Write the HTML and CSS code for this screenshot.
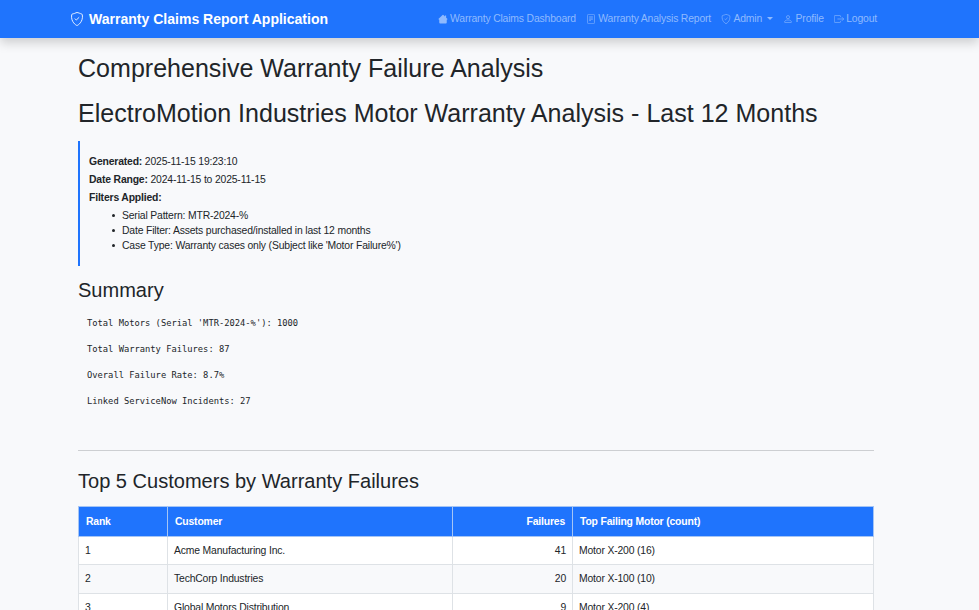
FILE: index.html
```html
<!DOCTYPE html>
<html lang="en">
<head>
<meta charset="utf-8">
<title>Warranty Claims Report Application</title>
<link rel="stylesheet" href="styles.css">
</head>
<body>
<nav class="navbar">
  <a class="brand"><svg class="brand-icon" viewBox="0 0 16 16"><path d="M5.3 1.6C4.4 1.8 3.2 2.2 2.6 2.4a1 1 0 0 0-.7.8c-.6 4.1.7 7.200 2.300 9.200C5.500 14.100 7.200 15.200 8 15.500c.8-.3 2.500-1.400 3.800-3.100 1.600-2 2.900-5.100 2.300-9.200a1 1 0 0 0-.7-.8C11.800 1.800 9.200.6 8 .6c-.6 0-1.600.5-2.700 1z"/><path d="M5.500 7.500 7.200 9.200 10.500 6"/></svg><span>Warranty Claims Report Application</span></a>
  <div class="links">
    <a class="link dashboard"><svg class="icon solid" viewBox="0 0 16 16"><path d="M8.700 1.500a1 1 0 0 0-1.400 0L.6 8.100l1 1H2v4.400A1.500 1.500 0 0 0 3.500 15h9a1.500 1.500 0 0 0 1.500-1.500V9.100h.4l1-1L13 5.800V2.500h-2v1.300z"/></svg><span>Warranty Claims Dashboard</span></a>
    <a class="link report"><svg class="icon" viewBox="0 0 16 16"><rect x="2.500" y=".5" width="11" height="15" rx="1.500"/><path d="M5 4.500h6M5 6.500h6M5 8.500h6M5 10.500h3"/></svg><span>Warranty Analysis Report</span></a>
    <a class="link admin"><svg class="icon" viewBox="0 0 16 16"><path d="M5.300 1.600C4.400 1.800 3.200 2.200 2.600 2.400a1 1 0 0 0-.7.8c-.6 4.100.7 7.200 2.300 9.200C5.500 14.100 7.200 15.200 8 15.500c.8-.3 2.500-1.400 3.800-3.100 1.600-2 2.900-5.100 2.300-9.200a1 1 0 0 0-.7-.8C11.800 1.800 9.200.6 8 .6c-.6 0-1.600.5-2.700 1z"/><path d="M5.500 7.500 7.200 9.200 10.500 6"/></svg><span>Admin</span><i class="caret"></i></a>
    <a class="link profile"><svg class="icon" viewBox="0 0 16 16"><circle cx="8" cy="5" r="2.500"/><path d="M2.500 13c0-2 2-3.500 5.500-3.500s5.500 1.500 5.500 3.500c0 .4-.2.5-.5.500H3c-.3 0-.5-.1-.5-.5z"/></svg><span>Profile</span></a>
    <a class="link logout"><svg class="icon" viewBox="0 0 16 16"><path d="M10.500 5V3.500a1 1 0 0 0-1-1h-8a1 1 0 0 0-1 1v9a1 1 0 0 0 1 1h8a1 1 0 0 0 1-1V11M5.500 8h10M12.500 5l3 3-3 3"/></svg><span>Logout</span></a>
  </div>
</nav>
<main class="report-body">
  <h1>Comprehensive Warranty Failure Analysis</h1>
  <h1>ElectroMotion Industries Motor Warranty Analysis - Last 12 Months</h1>
  <section class="meta">
    <p><b>Generated:</b> 2025-11-15 19:23:10</p>
    <p><b>Date Range:</b> 2024-11-15 to 2025-11-15</p>
    <p><b>Filters Applied:</b></p>
    <ul>
      <li>Serial Pattern: MTR-2024-%</li>
      <li>Date Filter: Assets purchased/installed in last 12 months</li>
      <li>Case Type: Warranty cases only (Subject like 'Motor Failure%')</li>
    </ul>
  </section>
  <h2>Summary</h2>
<pre class="summary">Total Motors (Serial 'MTR-2024-%'): 1000

Total Warranty Failures: 87

Overall Failure Rate: 8.7%

Linked ServiceNow Incidents: 27</pre>
  <hr>
  <h2>Top 5 Customers by Warranty Failures</h2>
  <table>
    <colgroup><col class="c-rank"><col class="c-customer"><col class="c-failures"><col></colgroup>
    <thead><tr><th>Rank</th><th>Customer</th><th class="num">Failures</th><th>Top Failing Motor (count)</th></tr></thead>
    <tbody>
      <tr><td>1</td><td>Acme Manufacturing Inc.</td><td class="num">41</td><td>Motor X-200 (16)</td></tr>
      <tr><td>2</td><td>TechCorp Industries</td><td class="num">20</td><td>Motor X-100 (10)</td></tr>
      <tr><td>3</td><td>Global Motors Distribution</td><td class="num">9</td><td>Motor X-200 (4)</td></tr>
    </tbody>
  </table>
</main>
</body>
</html>
```
FILE: styles.css
```css
* { box-sizing: border-box; }
html { overflow: hidden; }
body {
  margin: 0;
  height: 610px;
  overflow: hidden;
  background: #f8f9fb;
  color: #212529;
  font: 10.400px/15px "Liberation Sans", Arial, sans-serif;
  letter-spacing: -.17px;
}
.navbar {
  height: 38px;
  padding: 0 102px 1px 70px;
  display: flex;
  align-items: center;
  justify-content: space-between;
  background: #1f74fd;
  box-shadow: 0 5px 10px rgba(0, 0, 0, .17);
}
.brand {
  display: flex;
  align-items: center;
  gap: 5px;
  padding-top: 1px;
  color: #fff;
  font-size: 14.040px;
  font-weight: 700;
  letter-spacing: 0;
}
.brand-icon, .icon { fill: none; stroke: currentColor; stroke-width: 1; flex: none; }
.brand-icon { width: 14px; height: 14px; }
.links { display: flex; gap: 10.200px; color: #8fbafe; }
.link { display: flex; align-items: center; gap: 2.200px; white-space: nowrap; }
.icon { width: 10px; height: 10px; }
.icon.solid { fill: currentColor; stroke: none; }
.caret {
  margin-left: 3px;
  border: 3px solid transparent;
  border-top-color: currentColor;
  border-bottom: 0;
}
.report-body { width: 796px; margin-left: 78px; padding-top: 15px; }
h1, h2 { margin: 0; font-weight: 400; white-space: nowrap; letter-spacing: 0; }
h1 { font-size: 25.050px; line-height: 31px; margin-bottom: 14px; }
.meta {
  margin-top: -2px;
  height: 125px;
  padding: 12.500px 9px;
  border-left: 2px solid #1f74fd;
}
p { margin: 0 0 3px; }
ul { margin: 0; padding: 0 0 0 33px; list-style: none; }
li::before {
  content: "";
  display: inline-block;
  width: 3px;
  height: 3px;
  margin: 0 7.500px 2px -10.500px;
  border-radius: 50%;
  background: currentColor;
}
h2 { font-size: 20.040px; line-height: 25px; }
.meta + h2 { margin-top: 12px; }
.summary {
  margin: 14px 0 0;
  padding-left: 9px;
  font: 8.770px/13.080px "DejaVu Sans Mono", monospace;
  letter-spacing: 0;
}
hr { margin: 41px 0 18px; border: 0; border-top: 1px solid #cdcfd2; }
table {
  width: 796px;
  margin-top: 12px;
  table-layout: fixed;
  border-collapse: collapse;
  background: #fff;
}
.c-rank { width: 89px; }
.c-customer { width: 285px; }
.c-failures { width: 120px; }
th, td { padding: 0 6px; border: 1px solid #dee2e6; text-align: left; }
th { height: 30px; padding: 0 7px; background: #1f74fd; color: #fff; border-color: #a5c5f5; }
td { height: 28.500px; }
.num { text-align: right; }
tbody tr:nth-child(even) { background: #f8f9fb; }
```
